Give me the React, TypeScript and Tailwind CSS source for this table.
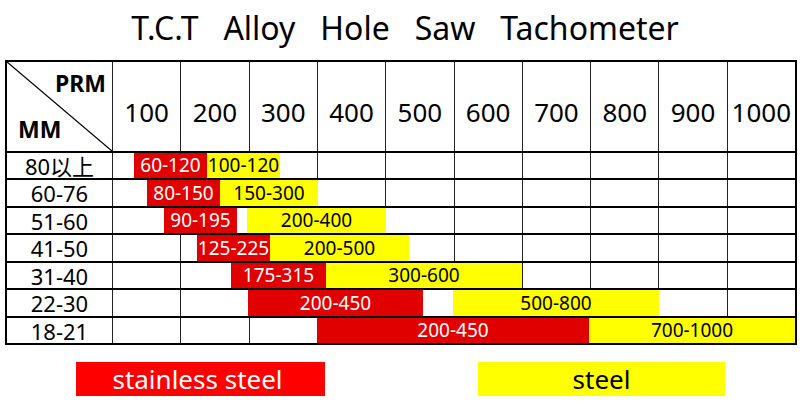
const cols = [100, 200, 300, 400, 500, 600, 700, 800, 900, 1000];

type Bar = { from: number; to: number; label: string; red?: boolean };

const rows: { label: string; h: string; bars: Bar[] }[] = [
  { label: '80以上', h: 'h-[27px]', bars: [
    { from: 134, to: 207, label: '60-120', red: true },
    { from: 207, to: 280, label: '100-120' },
  ] },
  { label: '60-76', h: 'h-[28px]', bars: [
    { from: 147, to: 220, label: '80-150', red: true },
    { from: 220, to: 318, label: '150-300' },
  ] },
  { label: '51-60', h: 'h-[27px]', bars: [
    { from: 164, to: 237, label: '90-195', red: true },
    { from: 247, to: 386, label: '200-400' },
  ] },
  { label: '41-50', h: 'h-[28px]', bars: [
    { from: 197, to: 270, label: '125-225', red: true },
    { from: 270, to: 409, label: '200-500' },
  ] },
  { label: '31-40', h: 'h-[27px]', bars: [
    { from: 231, to: 326, label: '175-315', red: true },
    { from: 326, to: 522, label: '300-600' },
  ] },
  { label: '22-30', h: 'h-[28px]', bars: [
    { from: 248, to: 423, label: '200-450', red: true },
    { from: 453, to: 659, label: '500-800' },
  ] },
  { label: '18-21', h: 'h-[27px]', bars: [
    { from: 317, to: 589, label: '200-450', red: true },
    { from: 589, to: 795, label: '700-1000' },
  ] },
];

// table content box starts at x=7 (5px margin + 2px border)
const ORIGIN = 7;

export default function App() {
  return (
    <div className="w-[800px] h-[415px] bg-white font-['Noto_Sans','Noto_Sans_CJK_SC',sans-serif] text-black overflow-hidden">
      <div className="h-[60px] flex items-center justify-center pl-[10px] pb-[4px]">
        <h1 className="text-[32px] leading-none whitespace-pre">T.C.T   Alloy   Hole   Saw   Tachometer</h1>
      </div>

      <div className="ml-[5px] w-[792px] border-2 border-black">
        {/* header row */}
        <div className="grid grid-cols-[105px_repeat(10,minmax(0,1fr))] h-[89px]">
          <div className="relative">
            <svg className="absolute inset-0 w-full h-full" viewBox="0 0 105 89" preserveAspectRatio="none">
              <line x1="0" y1="0" x2="105" y2="89" stroke="#000" strokeWidth="1.3" />
            </svg>
            <span className="absolute right-[6px] top-[10px] text-[23px] font-bold leading-none">PRM</span>
            <span className="absolute left-[11px] bottom-[10px] text-[23px] font-bold leading-none">MM</span>
          </div>
          {cols.map((c) => (
            <div key={c} className="border-l border-[#222] flex items-center justify-center pt-[12px] text-[26px]">
              {c}
            </div>
          ))}
        </div>

        {rows.map((r) => (
          <div key={r.label} className={`relative grid grid-cols-[105px_repeat(10,minmax(0,1fr))] border-t-2 border-black ${r.h}`}>
            <div className="flex items-center justify-center text-[22px] leading-none">{r.label}</div>
            {cols.map((c) => (
              <div key={c} className="border-l border-[#222]" />
            ))}
            {r.bars.map((b) => (
              <div
                key={b.label + b.from}
                className={`absolute top-0 bottom-0 flex items-center justify-center text-[19px] leading-none ${b.red ? 'bg-[#e00000] text-white' : 'bg-[#ffff00] text-black'}`}
                style={{ left: b.from - ORIGIN, width: b.to - b.from }}
              >
                {b.label}
              </div>
            ))}
          </div>
        ))}
      </div>

      <div className="flex mt-[17px] ml-[76px] gap-[153px]">
        <div className="w-[249px] h-[34px] bg-[#ff0000] text-white text-[26px] leading-none flex items-center justify-center pr-[6px]">
          stainless steel
        </div>
        <div className="w-[247px] h-[34px] bg-[#ffff00] text-black text-[26px] leading-none flex items-center justify-center">
          steel
        </div>
      </div>
    </div>
  );
}
